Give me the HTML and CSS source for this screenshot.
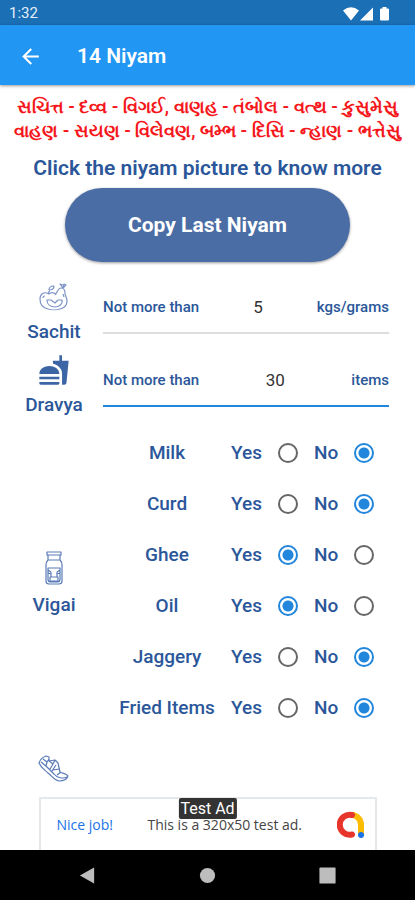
FILE: index.html
```html
<!DOCTYPE html>
<html lang="en">
<head>
<meta charset="utf-8">
<meta name="viewport" content="width=device-width, initial-scale=1">
<title>14 Niyam</title>
<link rel="stylesheet" href="styles.css">
</head>
<body>
<div class="status">
  <span>1:32</span>
  <svg class="status-icons" viewBox="0 0 48 16" aria-hidden="true"><path d="M0 4.500Q8 -2 16 4.500L8 14.500ZM17 14.500 30 1.500V14.500ZM37 3.500Q37 2.500 38 2.500H39.500V1H43.500V2.500H45Q46 2.500 46 3.500V13.500Q46 14.500 45 14.500H38Q37 14.500 37 13.500Z"/></svg>
</div>
<header class="appbar">
  <button class="back" type="button" aria-label="Back"><svg viewBox="0 0 24 24"><path d="M20 11H7.830l5.590-5.590L12 4l-8 8 8 8 1.410-1.410L7.830 13H20z"/></svg></button>
  <h1>14 Niyam</h1>
</header>
<main>
  <p class="verse" lang="gu">સચિત્ત - દવ્વ - વિગઈ, વાણહ - તંબોલ - વત્થ - કુસુમેસુ<br>વાહણ - સયણ - વિલેવણ, બમ્ભ - દિસિ - ન્હાણ - ભત્તેસુ</p>
  <h2>Click the niyam picture to know more</h2>
  <button class="copy" type="button">Copy Last Niyam</button>

  <section class="niyam limit">
    <a class="topic" href="#sachit">
      <svg class="icon line" viewBox="0 0 32 32" aria-hidden="true"><path d="M18 14C16 11 13 11 11 13 6 10 2 13 2 18c0 6 3 9 8 10 3 1 9 1 12 0 4-1 7-3 7-8 0-4-2-5-2-8 0-3-1-5-4-5-2 0-3 2-4 4-1 1-2 2-1 3M11 13c-1-2 0-3 1-3M11 9c0-3 2-4 5-4 0 3-2 4-5 4M25 7l-3-4 3 1M25 7l1-4 2 1-3 3M9 19h4l4 3 3-3h4c1 4-3 7-7 7s-8-2-8-7ZM5 17c0-1 1-2 2-2M25 13l1 3"/></svg>
      <span>Sachit</span>
    </a>
    <div class="field">
      <label for="sachit-max">Not more than</label>
      <input id="sachit-max" type="text" value="5">
      <span>kgs/grams</span>
    </div>
  </section>

  <section class="niyam limit">
    <a class="topic" href="#dravya">
      <svg class="icon solid" viewBox="0 0 24 24" aria-hidden="true"><path d="M18.060 22.990h1.660c.84 0 1.530-.64 1.630-1.460L23 5.050h-5V1h-1.970v4.050h-4.970l.3 2.340c1.710.47 3.310 1.320 4.270 2.260 1.440 1.420 2.430 2.890 2.430 5.290v8.050zM1 21.990V21h15.030v.99c0 .55-.45 1-1.010 1H2.010c-.56 0-1.010-.45-1.010-1zm15.030-7c0-8-15.030-8-15.030 0h15.030zM1.020 17h15v2h-15z"/></svg>
      <span>Dravya</span>
    </a>
    <div class="field active">
      <label for="dravya-max">Not more than</label>
      <input id="dravya-max" type="text" value="30">
      <span>items</span>
    </div>
  </section>

  <section class="niyam choices">
    <a class="topic" href="#vigai">
      <svg class="icon line tall" viewBox="0 0 32 36" aria-hidden="true"><path d="M9 2h14v3H9ZM10 5v5q-2 2-2 5v16q0 3 3 3h10q3 0 3-3V15q0-3-2-5V5M10 10h12M10 18h12v11q0 3-2 3h-8q-2 0-2-3ZM13 22l-3-2v3l3 1M19 22l3-2v3l-3 1M13 22v5M19 22v5M12 27h8v4h-8Z"/></svg>
      <span>Vigai</span>
    </a>
    <div class="options">
      <div class="option" role="radiogroup" aria-labelledby="milk"><span class="name" id="milk">Milk</span><label>Yes <input type="radio" name="milk"></label><label>No <input type="radio" name="milk" checked></label></div>
      <div class="option" role="radiogroup" aria-labelledby="curd"><span class="name" id="curd">Curd</span><label>Yes <input type="radio" name="curd"></label><label>No <input type="radio" name="curd" checked></label></div>
      <div class="option" role="radiogroup" aria-labelledby="ghee"><span class="name" id="ghee">Ghee</span><label>Yes <input type="radio" name="ghee" checked></label><label>No <input type="radio" name="ghee"></label></div>
      <div class="option" role="radiogroup" aria-labelledby="oil"><span class="name" id="oil">Oil</span><label>Yes <input type="radio" name="oil" checked></label><label>No <input type="radio" name="oil"></label></div>
      <div class="option" role="radiogroup" aria-labelledby="jaggery"><span class="name" id="jaggery">Jaggery</span><label>Yes <input type="radio" name="jaggery"></label><label>No <input type="radio" name="jaggery" checked></label></div>
      <div class="option" role="radiogroup" aria-labelledby="fried"><span class="name" id="fried">Fried Items</span><label>Yes <input type="radio" name="fried"></label><label>No <input type="radio" name="fried" checked></label></div>
    </div>
  </section>

  <section class="niyam shoes">
    <a class="topic" href="#vanah" aria-label="Vanah">
      <svg class="icon line shoe" viewBox="0 0 32 28" aria-hidden="true"><path d="M1 9C2 6 5 3 8 2l3 1 0 4 6-1 3 3 2 9c3 2 6 1 8 4-1 3-4 5-9 5-5-1-7-5-11-8-3-3-7-5-9-10ZM3 8l6 5 7 7c3 4 9 5 13 3M5 5l4 3 2-3M9 8l-1 4M11 7l4 3 2-4M15 10l-3 5M18 11l-4 6M15 16l6-1M23 18l-4 3"/></svg>
    </a>
  </section>
</main>
<footer>
  <aside class="ad">
    <span class="tag">Test Ad</span>
    <a href="#ad">Nice job!</a>
    <span class="ad-text">This is a 320x50 test ad.</span>
    <svg class="admob" viewBox="0 0 28 28" fill="none" stroke-width="6" stroke-linecap="round" aria-hidden="true"><path d="M15 4a9.500 9.500 0 0 1 9 10v8" stroke="#fbbc04"/><path d="M15 4A10 10 0 1 0 15 23.500" stroke="#e8352b"/><circle cx="24" cy="24" r="3" fill="#1a73e8"/></svg>
  </aside>
  <nav class="system">
    <button type="button" aria-label="Back"><svg viewBox="0 0 20 20"><path d="M2 10 16 2Q17 1 17 2V18Q17 19 16 18Z"/></svg></button>
    <button type="button" aria-label="Home"><svg viewBox="0 0 20 20"><circle cx="10" cy="10" r="8"/></svg></button>
    <button type="button" aria-label="Recent apps"><svg viewBox="0 0 20 20"><rect x="1.500" y="1.500" width="17" height="17" rx="1"/></svg></button>
  </nav>
</footer>
</body>
</html>
```
FILE: styles.css
```css
* { box-sizing: border-box; }
body {
  margin: 0;
  min-height: 100vh;
  display: flex;
  flex-direction: column;
  background: #fff;
  color: #2b579a;
  font-family: Roboto, "Noto Sans", sans-serif;
}
button { border: 0; padding: 0; background: none; font: inherit; }
a { color: inherit; text-decoration: none; }
.status {
  height: 25px;
  padding: 2px 24px 0 9px;
  display: flex;
  align-items: center;
  justify-content: space-between;
  background: #1a6fb5;
  color: #e4eef8;
  font-size: 15px;
  line-height: 23px;
}
.status-icons { width: 48px; height: 16px; fill: #fff; }
.appbar {
  height: 60px;
  padding: 2px 18px 0;
  display: flex;
  align-items: center;
  gap: 34px;
  background: #2196f3;
  color: #fff;
  box-shadow: 0 1px 3px #0006;
}
.appbar h1 { margin: 0; font-size: 21px; font-weight: 600; }
.back { display: flex; }
.back svg { width: 25px; height: 25px; fill: #fff; }
main { flex: 1; padding: 10px 26px 0 5px; }
.verse {
  margin: 0 -21px 0 0;
  color: #f5171b;
  font-size: 18px;
  font-weight: 600;
  line-height: 24px;
  text-align: center;
  white-space: nowrap;
}
h2 {
  margin: 12px -21px 7px 0;
  font-size: 21px;
  font-weight: 600;
  line-height: 26px;
  text-align: center;
}
.copy {
  display: block;
  width: calc(100% - 99px);
  height: 74px;
  margin: 0 0 8px 60px;
  border-radius: 37px;
  background: #4a6da5;
  color: #fff;
  font-size: 21px;
  font-weight: 700;
  box-shadow: 0 1px 3px #0006;
}
.niyam { display: grid; grid-template-columns: 98px 1fr; }
.limit { height: 73px; }
.topic {
  display: flex;
  flex-direction: column;
  align-items: center;
  justify-content: center;
  gap: 8px;
  font-size: 19px;
  font-weight: 500;
  line-height: 22px;
}
.limit .topic { justify-content: flex-end; }
.icon { width: 32px; height: 32px; }
.line { fill: none; stroke: #7d93c6; stroke-width: 1.200; stroke-linejoin: round; }
.solid { fill: #3c65a5; }
.tall { height: 36px; stroke: #5a7bb8; }
.shoe { height: 28px; stroke: #5a7bb8; }
.field {
  margin: 12px 0 9px;
  display: flex;
  align-items: center;
  border-bottom: 2px solid #ddd;
  font-size: 15px;
  font-weight: 500;
}
.field.active { border-color: #2186dc; }
.field input {
  flex: 1;
  width: 0;
  border: 0;
  outline: 0;
  background: none;
  color: #333;
  font: 17px Roboto, sans-serif;
  text-align: center;
}
.choices { margin-top: 11px; }
.choices .topic { padding-top: 6px; }
.option {
  height: 51px;
  display: flex;
  align-items: center;
  gap: 16px;
  font-size: 19px;
  font-weight: 500;
}
.name { width: 128px; margin-right: -16px; text-align: center; }
.option label { display: flex; align-items: center; gap: 16px; }
input[type="radio"] {
  appearance: none;
  width: 20px;
  height: 20px;
  margin: 0;
  border: 2px solid #666;
  border-radius: 50%;
}
input[type="radio"]:checked {
  border-color: #2186dc;
  background: radial-gradient(circle, #2186dc 5px, transparent 6px);
}
.shoes { padding-top: 21px; }
.ad {
  position: relative;
  width: calc(100% - 77px);
  height: 53px;
  margin: 0 auto;
  padding: 0 10px 0 16px;
  display: flex;
  align-items: center;
  justify-content: space-between;
  border: 2px solid #e4e8ea;
  border-bottom: 0;
  color: #444;
  font: 14px "Open Sans", sans-serif;
}
.ad a { color: #1a73e8; }
.admob { width: 28px; height: 28px; }
.tag {
  position: absolute;
  top: -1px;
  left: 50%;
  transform: translateX(-50%);
  padding: 0 2px;
  border-radius: 2px;
  background: #333;
  color: #fff;
  font: 16px/21px Roboto, sans-serif;
  white-space: nowrap;
}
.system {
  height: 50px;
  padding: 0 78px;
  display: flex;
  align-items: center;
  justify-content: space-between;
  background: #000;
}
.system button { display: flex; }
.system svg { width: 19px; height: 19px; fill: #bdbdbd; }
```
